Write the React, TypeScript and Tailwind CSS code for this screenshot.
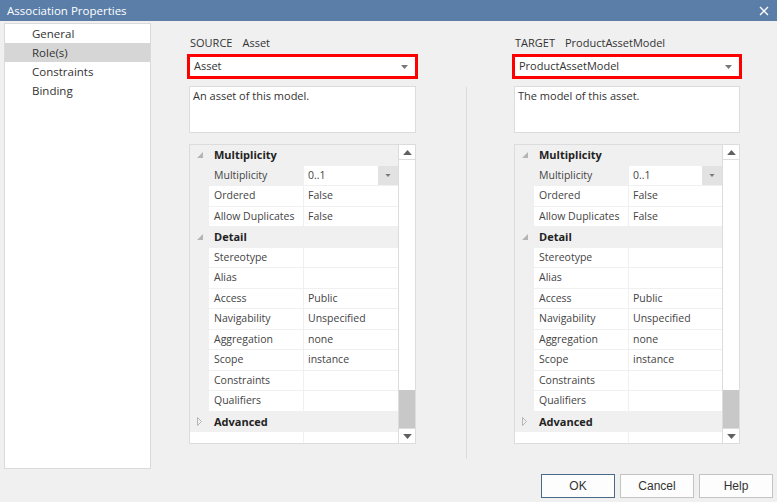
import React from 'react';

type Row =
  | { kind: 'cat'; label: string; open: boolean }
  | { kind: 'prop'; name: string; value?: string; combo?: boolean; selected?: boolean };

const rows: Row[] = [
  { kind: 'cat', label: 'Multiplicity', open: true },
  { kind: 'prop', name: 'Multiplicity', value: '0..1', combo: true, selected: true },
  { kind: 'prop', name: 'Ordered', value: 'False' },
  { kind: 'prop', name: 'Allow Duplicates', value: 'False' },
  { kind: 'cat', label: 'Detail', open: true },
  { kind: 'prop', name: 'Stereotype' },
  { kind: 'prop', name: 'Alias' },
  { kind: 'prop', name: 'Access', value: 'Public' },
  { kind: 'prop', name: 'Navigability', value: 'Unspecified' },
  { kind: 'prop', name: 'Aggregation', value: 'none' },
  { kind: 'prop', name: 'Scope', value: 'instance' },
  { kind: 'prop', name: 'Constraints' },
  { kind: 'prop', name: 'Qualifiers' },
  { kind: 'cat', label: 'Advanced', open: false },
];

const font = "font-['Open_Sans',sans-serif]";

// tiny arrow glyphs used by combos and the scrollbar
const Caret = ({ up = false, w = 7, h = 4 }: { up?: boolean; w?: number; h?: number }) => (
  <svg width={w} height={h} viewBox="0 0 7 4">
    {up ? <path d="M0 4 L3.5 0 L7 4 Z" fill="currentColor" /> : <path d="M0 0 L7 0 L3.5 4 Z" fill="currentColor" />}
  </svg>
);

const Expander = ({ open }: { open: boolean }) =>
  open ? (
    <svg width="6" height="6" viewBox="0 0 6 6">
      <path d="M6 0 L6 6 L0 6 Z" fill="#b5b5b5" />
    </svg>
  ) : (
    <svg width="5" height="9" viewBox="0 0 5 9">
      <path d="M0.5 0.5 L4.5 4.5 L0.5 8.5 Z" fill="none" stroke="#b5b5b5" />
    </svg>
  );

const PropertyGrid = ({ width }: { width: number }) => (
  <div className="mt-[11px] h-[300px] border border-[#dcdcdc] bg-white flex" style={{ width }}>
    {/* rows */}
    <div className="flex-1 flex flex-col overflow-hidden">
      {rows.map((r, i) =>
        r.kind === 'cat' ? (
          <div key={i} className="h-[20.5px] shrink-0 flex items-center bg-[#f0f0f0]">
            <div className="w-[19px] flex justify-center">
              <Expander open={r.open} />
            </div>
            <span className="pl-[5px] text-[11px] font-bold text-[#222]">{r.label}</span>
          </div>
        ) : (
          <div key={i} className="h-[20.5px] shrink-0 flex">
            <div className="w-[19px] bg-[#f0f0f0]" />
            <div
              className={`w-[94px] flex items-center pl-[5px] text-[10.5px] text-[#444] border-b border-[#f0f0f0] ${
                r.selected ? 'bg-[#f0f0f0]' : 'bg-white'
              }`}
            >
              {r.name}
            </div>
            <div className="flex-1 flex items-center pl-[4px] text-[10.5px] text-[#444] border-b border-l border-[#f0f0f0]">
              <span className="flex-1">{r.value}</span>
              {r.combo && (
                <div className="w-[20px] h-[19px] bg-[#e2e2e2] flex items-center justify-center text-[#7a7a7a]">
                  <Caret w={6} h={3} />
                </div>
              )}
            </div>
          </div>
        ),
      )}
      <div className="flex-1 flex">
        <div className="w-[113px]" />
        <div className="flex-1 border-l border-[#f0f0f0]" />
      </div>
    </div>
    {/* scrollbar */}
    <div className="w-[17px] flex flex-col border-l border-[#dcdcdc] bg-white">
      <div className="h-[15px] flex items-center justify-center border-b border-[#dcdcdc] text-[#606060]">
        <Caret up w={9} h={5} />
      </div>
      <div className="flex-1" />
      <div className="h-[38px] bg-[#c8c8c8]" />
      <div className="h-[15px] flex items-center justify-center border-t border-[#dcdcdc] text-[#606060]">
        <Caret w={9} h={5} />
      </div>
    </div>
  </div>
);

const RolePanel = ({
  kind,
  name,
  description,
  width,
}: {
  kind: string;
  name: string;
  description: string;
  width: number;
}) => (
  <div className="flex flex-col pt-[14px]" style={{ width }}>
    <div className="h-[16px] flex items-center gap-[10px] pl-[1px] text-[11px] text-[#333]">
      <span>{kind}</span>
      <span>{name}</span>
    </div>
    <div
      className="mt-[3px] -ml-[2px] h-[25px] border-[3px] border-[#ff0000] bg-white flex items-center pl-[4px] pr-[7px] text-[11px] text-[#333]"
      style={{ width: width + 4 }}
    >
      <span className="flex-1">{name}</span>
      <span className="text-[#777]">
        <Caret w={7} h={4} />
      </span>
    </div>
    <div className="mt-[7px] h-[47px] border border-[#dcdcdc] bg-white px-[3px] py-[1px] text-[11px] text-[#333]">
      {description}
    </div>
    <PropertyGrid width={width} />
  </div>
);

const Button = ({ label, primary = false }: { label: string; primary?: boolean }) => (
  <button
    className={`w-[74px] h-[24px] bg-[#fdfdfd] border text-[12px] text-[#333] font-['Liberation_Sans',sans-serif] ${
      primary ? 'border-[#4a6a8c]' : 'border-[#c4c4c4]'
    }`}
  >
    {label}
  </button>
);

export default function App() {
  return (
    <div className={`w-[777px] h-[502px] bg-[#f0f0f0] flex flex-col overflow-hidden ${font}`}>
      {/* title bar */}
      <div className="h-[22px] bg-[#5a7ea7] flex items-center justify-between pl-[7px] pr-[8px]">
        <span className="text-[11.5px] text-white">Association Properties</span>
        <svg width="10" height="10" viewBox="0 0 10 10">
          <path d="M1 1 L9 9 M9 1 L1 9" stroke="white" strokeWidth="1.3" />
        </svg>
      </div>

      <div className="flex flex-1">
        {/* left nav */}
        <div className="ml-[4px] mt-[2px] w-[147px] h-[446px] bg-white border border-[#dadada] text-[11.5px] text-[#333]">
          {['General', 'Role(s)', 'Constraints', 'Binding'].map((item) => (
            <div
              key={item}
              className={`h-[19px] flex items-center pl-[27px] ${item === 'Role(s)' ? 'bg-[#d6d6d6]' : ''}`}
            >
              {item}
            </div>
          ))}
        </div>

        {/* role panels */}
        <div className="ml-[38px] flex">
          <RolePanel kind="SOURCE" name="Asset" description="An asset of this model." width={227} />
          <div className="ml-[50px] mr-[47px] mt-[66px] w-px h-[372px] bg-[#dcdcdc]" />
          <RolePanel
            kind="TARGET"
            name="ProductAssetModel"
            description="The model of this asset."
            width={226}
          />
        </div>
      </div>

      {/* dialog buttons */}
      <div className="h-[34px] flex justify-end items-start gap-[5px] pr-[4px] pt-[5px]">
        <Button label="OK" primary />
        <Button label="Cancel" />
        <Button label="Help" />
      </div>
    </div>
  );
}
